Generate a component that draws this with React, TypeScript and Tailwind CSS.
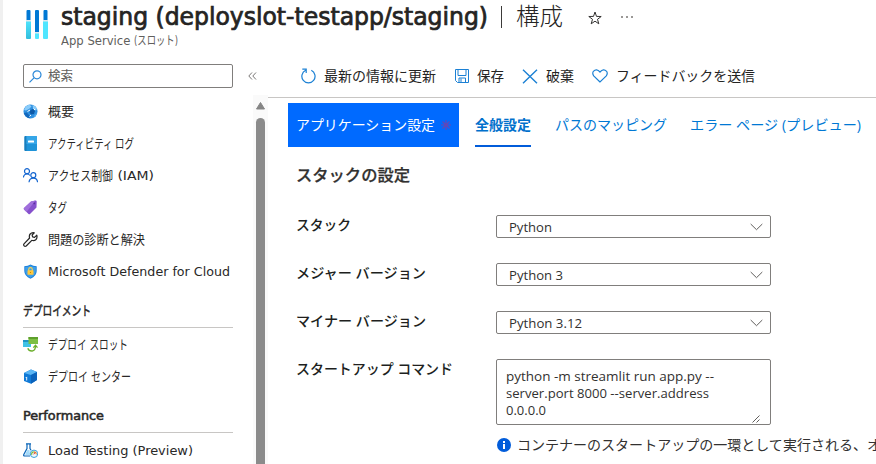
import { useLayoutEffect, useRef, type ReactNode } from "react";

const UI = "font-['DejaVu_Sans_Condensed','DejaVu_Sans','Noto_Sans_CJK_JP',sans-serif]";
const SEGOE = "font-['Open_Sans','Noto_Sans','Noto_Sans_CJK_JP',sans-serif]";

/** One line of text, condensed or widened to take exactly the given width. */
function Fit({ w, box = "", className = "", children }: { w: number; box?: string; className?: string; children: ReactNode }) {
  const ref = useRef<HTMLSpanElement>(null);
  useLayoutEffect(() => {
    const el = ref.current;
    if (el) el.style.transform = `scaleX(${w / el.getBoundingClientRect().width})`;
    return () => {
      if (el) el.style.transform = "";
    };
  }, [w]);
  return (
    <span className={`block shrink-0 ${box}`} style={{ width: w }}>
      <span ref={ref} className={`inline-block origin-left whitespace-pre ${className}`}>
        {children}
      </span>
    </span>
  );
}

function AppIcon() {
  return (
    <svg width="22" height="29" viewBox="0 0 22 29">
      <defs>
        <linearGradient id="cy" x2="0" y2="1"><stop stopColor="#50e6ff" /><stop offset="1" stopColor="#32bedd" /></linearGradient>
      </defs>
      <rect y="10" width="5" height="19" rx="1" fill="url(#cy)" />
      <rect x="9" y="22" width="4" height="7" rx="1" fill="#50e6ff" />
      <rect x="17" y="10" width="5" height="19" rx="1" fill="#50e6ff" />
      <path d="M.5 10V1q0-1 1-1h2q1 0 1 1v9zM9 22V1q0-1 1-1h2q1 0 1 1v21zM17.500 10V1q0-1 1-1h2q1 0 1 1v9z" fill="#0078d4" />
      <path d="M0 10h5v1.500H0zM9 22h4v1.500H9zM17 10h5v1.500h-5z" fill="#dfe9ee" />
    </svg>
  );
}

const icons: Record<string, ReactNode> = {
  globe: (
    <>
      <circle cx="7.500" cy="7.500" r="7" fill="#2f90e0" />
      <path d="M1 6Q2.300 1.500 6.500.6L8.500 2.500 6 5 3 6.500zM9.500.9Q13 2 14.200 5L12.500 6.500 10 4z" fill="#8accfa" />
      <path d="M.8 9l3-.5L6.500 11.500l.3 2.800Q2.300 13.500 .8 9z" fill="#1368bd" />
      <path d="M7.500 6l2.500-1 2 2-1 3-3 .5-1.500-2z" fill="#0c59a8" />
      <path d="M4.500 7.500l2.500-1.500M10.500 4.500L12 6M8 11l-1.500 1.500" stroke="#fff" fill="none" />
      <path d="M11.500 11l2.500-2q-.6 3-3 4.400z" fill="#55aef0" />
    </>
  ),
  log: (
    <>
      <rect x="1.500" y="0" width="12.500" height="15" rx="1" fill="#1f93d8" />
      <path d="M1.500 1q0-1 1-1H3.500v15H2.500q-1 0-1-1z" fill="#1a7dbb" />
      <path d="M3.500 0H13q1 0 1 1v7H3.500z" fill="#35a6e8" />
      <rect x="5" y="4.500" width="6" height="2" rx=".5" fill="#fff" />
    </>
  ),
  iam: (
    <g fill="none" stroke="#1566d0" strokeWidth="1.200">
      <circle cx="4" cy="3.200" r="2.500" />
      <path d="M.4 9.500Q.8 6 4 6q2 0 2.900 1.500" />
      <circle cx="10.300" cy="7.200" r="2.500" />
      <path d="M6 14.200q.5-4 4.300-4t4.300 4" />
    </g>
  ),
  tag: (
    <>
      <path d="M8 1.500L12.500.5q1.200 0 1.200 1.200L13.500 7.500 7 14q-.8.600-1.500 0L1 9.500q-.6-.8 0-1.500z" fill="#8650cc" />
      <path d="M8 1.500L12.500.5 3.500 12 1 9.500q-.6-.8 0-1.500z" fill="#a06fdc" />
      <circle cx="11.300" cy="3.400" r=".9" fill="#5a2fa0" />
    </>
  ),
  wrench: (
    <path
      d="M13.800 3.200l-2.300 2.200-1.900-.5-.5-1.900L11.300.8Q8.800.2 7.200 2q-1.400 1.700-.6 4L1 11.800q-.8 1 .1 2t2.100.2L8.800 8.300q2.500.8 4.200-.8 1.500-1.700.8-4.300z"
      fill="none" stroke="#252525" strokeWidth="1.200" strokeLinejoin="round"
    />
  ),
  shield: (
    <>
      <path d="M7.500.5Q10 2.300 13.700 2.300V7q0 5-6.200 7.700Q1.300 12 1.300 7V2.300Q5 2.300 7.500.5z" fill="#1a80dc" />
      <path d="M7.500 1.500Q9.800 3 12.800 3.100V7q0 4.200-5.300 6.700Q2.200 11.200 2.200 7V3.100Q5.200 3 7.500 1.500z" fill="#3f9fe8" />
      <path d="M5.700 7V5.500q0-1.900 1.800-1.900t1.800 1.900V7" fill="none" stroke="#ffd34a" strokeWidth="1.100" />
      <rect x="4.500" y="6.300" width="6" height="4.500" rx=".6" fill="#ffc83d" />
      <circle cx="7.500" cy="8.500" r=".6" fill="#b87a00" />
    </>
  ),
  slots: (
    <>
      <rect x="0" y="3" width="8" height="7" fill="#3fc3e6" />
      <rect x="0" y="3" width="8" height="2" fill="#1f93c4" />
      <rect x="5.500" y="0" width="9.500" height="7" fill="#7cc043" />
      <rect x="5.500" y="0" width="9.500" height="2" fill="#5ea02c" />
      <path d="M4.800 11.200q1 3 4.400 2.800 3.300-.5 3.300-5M10.300 10.600l2.200-2.300 2 2.300" fill="none" stroke="#6bae2b" strokeWidth="1.300" />
    </>
  ),
  box: (
    <>
      <path d="M1 4l7-3.500L14 3v8l-6 3.800L1 12z" fill="#0f79d6" />
      <path d="M1 4l7-3.500L14 3 8 6z" fill="#5ab5f4" />
      <path d="M8 6l6-3v8l-6 3.800z" fill="#0b62bb" />
      <path d="M3.700 8v3.500M2.800 8.800l.9-.9" stroke="#fff" strokeWidth=".9" fill="none" />
    </>
  ),
  load: (
    <>
      <path d="M3 .8h5M4 1v4.500L.8 11.500Q.2 13 1.800 13H7M7 1v4.500l1 1.800" fill="none" stroke="#0864b8" strokeWidth="1.200" />
      <path d="M2.800 10L4.500 7h2L7 12H2.500q-.6-1 .3-2z" fill="#a5dbfa" />
      <circle cx="11" cy="10.800" r="3.700" fill="#eef8ff" stroke="#39a0dc" />
      <path d="M8.800 11.800a2.200 2.200 0 0 1 2-3" fill="none" stroke="#75b82d" strokeWidth="1.200" />
      <path d="M11 8.800a2.200 2.200 0 0 1 2.200 2.500" fill="none" stroke="#ef8b2c" strokeWidth="1.200" />
      <path d="M10.800 11.300l1.200-2" stroke="#d33" />
    </>
  ),
};

function NavItem({ icon, w, children }: { icon: string; w: number; children: ReactNode }) {
  return (
    <div className="flex h-8 items-center gap-[10px]">
      <svg width="15" height="15" viewBox="0 0 15 15" className="mb-px shrink-0">{icons[icon]}</svg>
      <Fit w={w}>{children}</Fit>
    </div>
  );
}

function NavHeading({ w, children }: { w: number; children: ReactNode }) {
  return (
    <div className="flex h-[33px] w-[210px] items-center border-b border-[#c8c6c4]">
      <Fit w={w} className="[-webkit-text-stroke:0.5px_#292827]">{children}</Fit>
    </div>
  );
}

function SelectBox({ w, value }: { w: number; value: string }) {
  return (
    <div className="flex h-[23px] w-[275px] items-center justify-between rounded-[2px] border border-[#807e7c] pr-[7px] pl-3">
      <Fit w={w} box="mb-[2px]" className="text-[13px] leading-5">{value}</Fit>
      <svg width="13" height="8" viewBox="0 0 13 8" fill="none" stroke="#605e5c"><path d="M.7 1l5.800 5.700L12.300 1" /></svg>
    </div>
  );
}

function Field({ label, w, children }: { label: string; w: number; children: ReactNode }) {
  return (
    <div className="flex h-12 items-start">
      <div className="mt-[-3px] w-[200px] shrink-0">
        <Fit w={w} className="text-sm leading-5 font-medium text-[#201f1e]">{label}</Fit>
      </div>
      {children}
    </div>
  );
}

function Header() {
  return (
    <header className="flex h-[60px] shrink-0 items-start pl-[23px]">
      <div className="pt-[10px]"><AppIcon /></div>
      <div className="pl-[13px]">
        <div className="flex h-[33px] items-center text-[#252423]">
          <Fit w={427} className="text-2xl leading-8 [-webkit-text-stroke:0.7px_#252423]">staging (deployslot-testapp/staging)</Fit>
          <span className="ml-[13px] h-[22px] w-px bg-[#3b3a39]" />
          <Fit w={47} box="ml-[14px]" className="text-2xl leading-8 font-light">構成</Fit>
          <svg width="14" height="14" viewBox="0 0 14 14" className="mt-[2px] ml-[25px]" fill="none" stroke="#323130"><path d="M7 1l1.500 4.400 4.700.1-3.700 2.800 1.300 4.500L7 10.200l-3.800 2.600 1.300-4.500L.8 5.500l4.700-.1z" /></svg>
          <span className="ml-[19px] flex gap-[3px]">
            <i className="size-[2px] bg-[#9a9896]" /><i className="size-[2px] bg-[#9a9896]" /><i className="size-[2px] bg-[#9a9896]" />
          </span>
        </div>
        <div className="flex h-[17px] text-xs leading-[17px] text-[#605e5c]">
          <Fit w={73}>App Service </Fit>
          <Fit w={44}>(スロット)</Fit>
        </div>
      </div>
    </header>
  );
}

function Sidebar() {
  return (
    <aside className="flex w-[265px] shrink-0 flex-col text-[13px] leading-5">
      <div className="flex h-[35px] shrink-0 items-center pl-5">
        <div className="mt-[-3px] flex h-6 w-[210px] items-center gap-[6px] rounded-[2px] border border-[#807e7c] pl-[5px]">
          <svg width="13" height="13" viewBox="0 0 13 13" fill="none" stroke="#2b88d8" strokeWidth="1.200"><circle cx="8" cy="4.800" r="4" /><path d="M5 7.800L.5 12.400" /></svg>
          <Fit w={25} className="text-[#605e5c]">検索</Fit>
        </div>
        <svg width="9" height="8" viewBox="0 0 9 8" className="mt-[-3px] ml-[15px]" fill="none" stroke="#7a7876"><path d="M4 .5L.8 4 4 7.500M8 .5L4.800 4 8 7.500" /></svg>
      </div>
      <div className="flex min-h-0 flex-1 overflow-hidden">
        <nav className="flex-1 pl-5 text-[#292827]">
          <div className="h-px" />
          <NavItem icon="globe" w={26}>概要</NavItem>
          <NavItem icon="log" w={86}>アクティビティ ログ</NavItem>
          <div className="flex items-center"><NavItem icon="iam" w={65}>アクセス制御</NavItem><Fit w={41}> (IAM)</Fit></div>
          <NavItem icon="tag" w={19}>タグ</NavItem>
          <NavItem icon="wrench" w={97}>問題の診断と解決</NavItem>
          <NavItem icon="shield" w={182}>Microsoft Defender for Cloud</NavItem>
          <div className="h-[7px]" />
          <NavHeading w={68}>デプロイメント</NavHeading>
          <div className="h-px" />
          <NavItem icon="slots" w={80}>デプロイ スロット</NavItem>
          <NavItem icon="box" w={83}>デプロイ センター</NavItem>
          <div className="h-[7px]" />
          <NavHeading w={81}>Performance</NavHeading>
          <div className="h-[2px]" />
          <NavItem icon="load" w={145}>Load Testing (Preview)</NavItem>
        </nav>
        <div className="flex w-[15px] flex-col items-center bg-[#fafafa]">
          <svg width="9" height="8" viewBox="0 0 9 8" className="mt-[7px] shrink-0"><path d="M4.500.5L8.500 7h-8z" fill="#858585" stroke="#858585" strokeLinejoin="round" /></svg>
          <div className="mt-[8px] w-[9px] flex-1 rounded-t-full bg-[#8b8b8b]" />
        </div>
      </div>
    </aside>
  );
}

function Toolbar() {
  return (
    <div className="flex h-[38px] shrink-0 items-center border-b border-[#c8c6c4] pb-[5px] pl-[33px] text-sm leading-5 text-[#252423]">
      <svg width="15" height="16" viewBox="0 0 15 16" fill="none" stroke="#1b80d4" strokeWidth="1.200"><path d="M4.600 2.300A6.600 6.600 0 1 0 10.300 2.300M1.300 1.200h3.900v3.900" /></svg>
      <Fit w={112} box="ml-2">最新の情報に更新</Fit>
      <svg width="14" height="14" viewBox="0 0 14 14" className="ml-[19px] shrink-0" fill="none" stroke="#1b80d4"><path d="M.5.500h13v13h-11l-2-2zM3 .500v6h8V.500M4 13.500V9h6.500v4.500M6 9.500V13" /></svg>
      <Fit w={27} box="ml-[8px]">保存</Fit>
      <svg width="16" height="15" viewBox="0 0 16 15" className="ml-[18px] shrink-0" stroke="#1b80d4" strokeWidth="1.400"><path d="M1 .700l14 13.600M15 .700L1 14.300" /></svg>
      <Fit w={28} box="ml-[8px]">破棄</Fit>
      <svg width="16" height="14" viewBox="0 0 16 14" className="ml-[18px] shrink-0" fill="none" stroke="#1b80d4" strokeWidth="1.200"><path d="M8 13L1.700 6.900Q0 4.500 1.400 2.300 4.500-.8 8 3q3.500-3.800 6.600-.7Q16 4.500 14.300 6.900z" /></svg>
      <Fit w={139} box="ml-[8px]">フィードバックを送信</Fit>
    </div>
  );
}

export default function App() {
  return (
    <div className={`flex h-[464px] w-[876px] flex-col overflow-hidden border-l-[3px] border-[#f0f0f0] bg-white ${UI}`}>
      <Header />
      <div className="flex min-h-0 flex-1">
        <Sidebar />
        <main className={`flex min-w-0 flex-1 flex-col ${SEGOE}`}>
          <Toolbar />
          <div className="mt-[5px] flex h-11 shrink-0 items-center pl-5 text-sm leading-5 text-[#0078d4]">
            <div className="flex h-11 w-[171px] shrink-0 items-center bg-[#006aff] pl-2 text-white">
              <Fit w={139}>アプリケーション設定</Fit>
              <svg width="10" height="10" viewBox="0 0 10 10" className="ml-[6px]" stroke="#6546b5" strokeWidth="1.200"><path d="M5 0v10M0 5h10M1.500 1.500l7 7M8.500 1.500l-7 7" /></svg>
            </div>
            <div className="ml-4 flex h-11 items-center border-b-2 border-[#015cda] pt-[2px] font-bold text-[#0070cc]"><Fit w={56}>全般設定</Fit></div>
            <Fit w={112} box="ml-6">パスのマッピング</Fit>
            <Fit w={171} box="ml-[23px]">エラー ページ (プレビュー)</Fit>
          </div>
          <div className="flex flex-col pt-[16px] pl-7 text-[#323130]">
            <Fit w={114} className="text-base leading-6 font-medium [-webkit-text-stroke:0.25px_#323130]">スタックの設定</Fit>
            <div className="mt-[28px] flex flex-col">
              <Field label="スタック" w={55}><SelectBox w={43} value="Python" /></Field>
              <Field label="メジャー バージョン" w={130}><SelectBox w={54} value="Python 3" /></Field>
              <Field label="マイナー バージョン" w={130}><SelectBox w={73} value="Python 3.12" /></Field>
              <Field label="スタートアップ コマンド" w={157}>
                <div>
                  <div className="relative h-[66px] w-[275px] rounded-[2px] border border-[#807e7c] pt-[8px] pl-[9px] text-[13px] leading-[17px]">
                    <Fit w={208}>python -m streamlit run app.py --</Fit>
                    <Fit w={203}>server.port 8000 --server.address</Fit>
                    <Fit w={40}>0.0.0.0</Fit>
                    <svg width="8" height="8" viewBox="0 0 8 8" className="absolute right-[10px] bottom-[1px]" stroke="#605e5c"><path d="M.5 7.500l7-7M4.500 7.500l3-3" /></svg>
                  </div>
                  <div className="mt-[9px] flex items-center">
                    <svg width="14" height="14" viewBox="0 0 14 14" className="ml-px shrink-0"><circle cx="7" cy="7" r="7" fill="#015cda" /><path d="M6 3h2v2H6zM6 6h2v5H6z" fill="#fff" /></svg>
                    <Fit w={364} box="ml-[6px] mt-[-2px]" className="text-sm leading-5">コンテナーのスタートアップの一環として実行される、オ</Fit>
                  </div>
                </div>
              </Field>
            </div>
          </div>
        </main>
      </div>
    </div>
  );
}
